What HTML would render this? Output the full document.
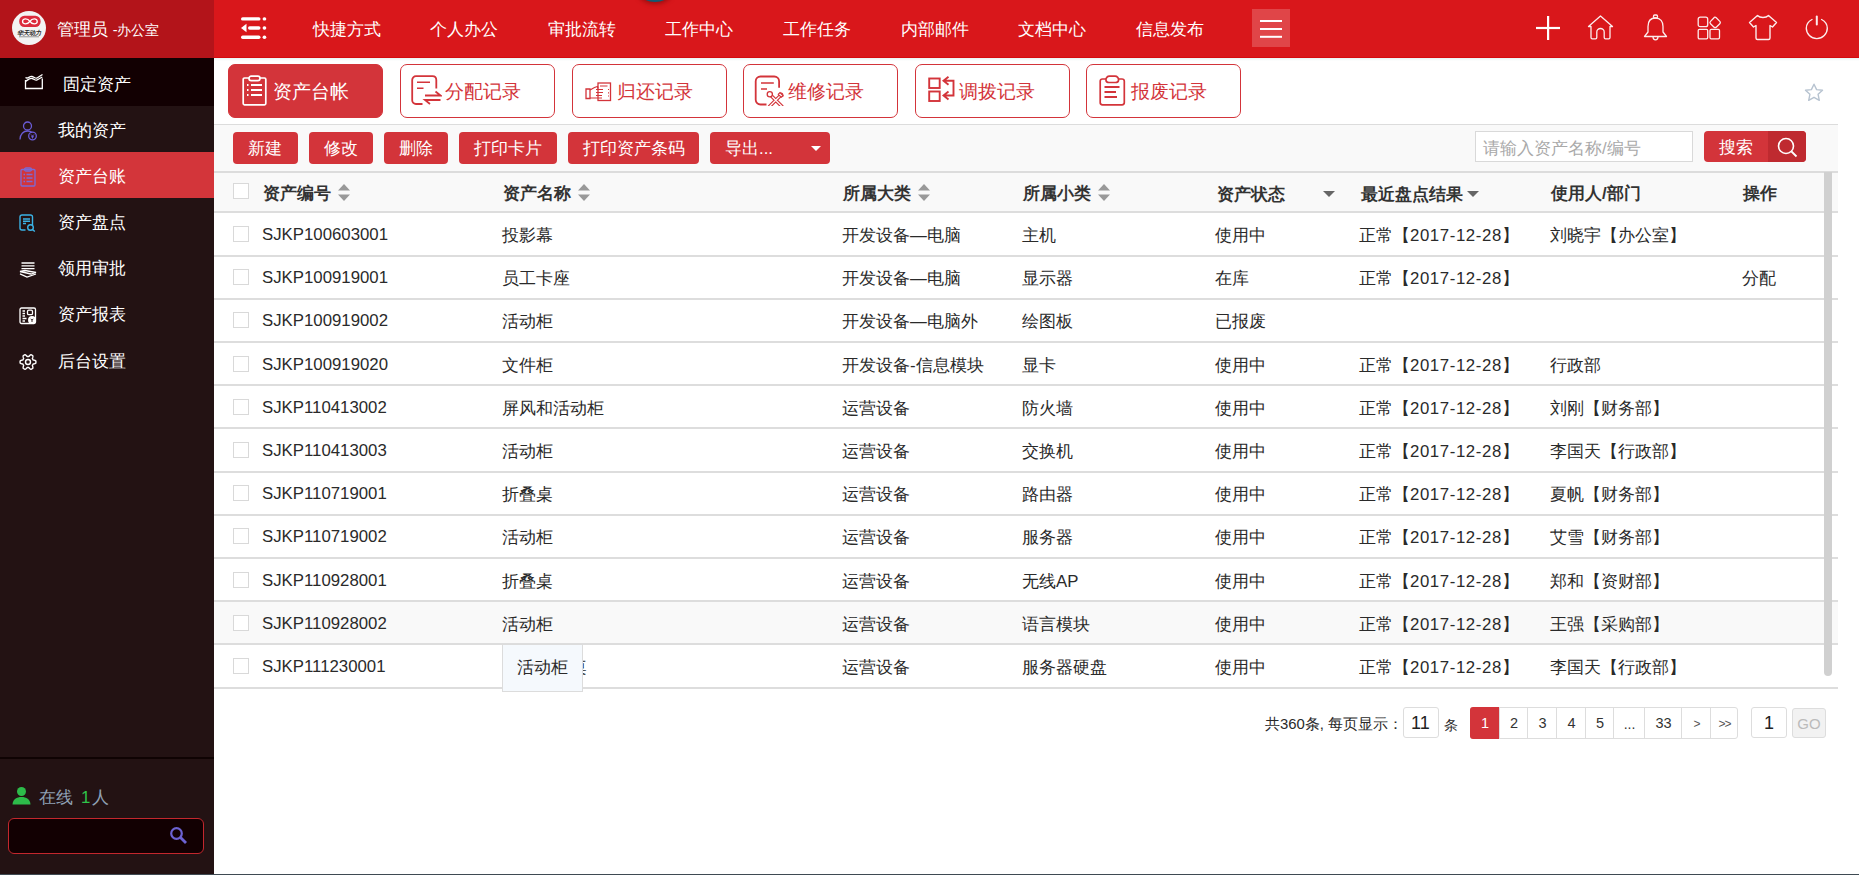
<!DOCTYPE html>
<html><head><meta charset="utf-8"><style>
*{margin:0;padding:0;box-sizing:border-box}
html,body{width:1859px;height:875px;overflow:hidden;background:#fff;font-family:"Liberation Sans",sans-serif;font-size:16.8px;color:#2a2a2a}
div,span,svg{position:absolute}
.t{white-space:nowrap;line-height:22px}
.w{color:#fff}
.mi{left:58px;color:#fff;white-space:nowrap;line-height:22px}
.nav{top:19px;color:#fff;white-space:nowrap;line-height:22px}
.tab{top:64px;width:155px;height:54px;border:1px solid #d3343a;border-radius:7px;background:#fff}
.tab.on{background:#d3343a}
.tabt{top:82px;color:#d3343a;font-size:19.2px;line-height:22px;white-space:nowrap}
.btn{top:132px;height:32px;background:#d3343a;border-radius:4px}
.btt{top:140px;color:#fff;white-space:nowrap;line-height:22px}
.cb{width:16px;height:16px;border:1px solid #d9d9d9;background:#fff}
.h{font-weight:bold;color:#333}
.ln{left:214px;width:1624px;height:2px;background:#ddd}
.sort{width:12px;height:17px}
.pg{top:707px;height:31px;border:1px solid #ddd;border-left:none;background:#fff;text-align:center;line-height:29px;font-size:15px;color:#333}
</style></head><body>
<div style="left:0;top:0;width:214px;height:875px;background:#231213"></div>
<div style="left:0;top:0;width:214px;height:58px;background:#b3141a"></div>
<svg style="left:12px;top:11px" width="34" height="34" viewBox="0 0 34 34">
<circle cx="17" cy="17" r="17" fill="#f3f3f3"/>
<rect x="7.2" y="4.8" width="21.4" height="11.2" rx="5.2" fill="#dc2a3c"/>
<path d="M17.9 10.4 C15.8 7.2 10.6 7.0 10.6 10.4 C10.6 13.8 15.8 13.6 17.9 10.4 C20.0 7.2 25.2 7.0 25.2 10.4 C25.2 13.8 20.0 13.6 17.9 10.4Z" fill="none" stroke="#fff" stroke-width="1.4"/>
<text x="17" y="23.6" text-anchor="middle" font-size="6.2" font-weight="bold" font-style="italic" fill="#2a2a2a" style="letter-spacing:-0.2px">华天动力</text>
<rect x="7" y="25" width="20" height="1.4" fill="#b0b0b0"/>
</svg>
<div class="t w" style="left:57px;top:19px">管理员 <span style="position:static;font-size:14.4px">-办公室</span></div>
<div style="left:0;top:58px;width:214px;height:48px;background:#120002"></div>
<div style="left:0;top:152px;width:214px;height:46px;background:#d3353a"></div>
<div class="mi" style="left:63px;top:74px">固定资产</div>
<div class="mi" style="left:58px;top:120px">我的资产</div>
<div class="mi" style="left:58px;top:166px">资产台账</div>
<div class="mi" style="left:58px;top:212px">资产盘点</div>
<div class="mi" style="left:58px;top:258px">领用审批</div>
<div class="mi" style="left:58px;top:304px">资产报表</div>
<div class="mi" style="left:58px;top:351px">后台设置</div>
<svg style="left:24px;top:73px" width="20" height="17" viewBox="0 0 20 17" fill="none" stroke="#fff" stroke-width="1.3">
<path d="M1.5 7 V15.5 H18.3 V5.5"/>
<path d="M1.5 4.5 C4 6.5 5 3 8 3.5 C10.5 4 11 6 13 5 L18.5 1.5"/>
<path d="M1.5 8.5 C4 7 5 5 8 5.5 C10.5 6 11 8 13 7 L18.3 4"/>
</svg>
<svg style="left:19px;top:121px" width="19" height="20" viewBox="0 0 19 20" fill="none" stroke="#6a5cd6" stroke-width="1.3">
<circle cx="8.5" cy="5" r="4"/>
<path d="M1 18.5 C1 13 4.5 10 8.5 10 C10.5 10 12 10.6 13.2 11.6"/>
<circle cx="13.5" cy="15" r="3.8"/>
<path d="M12 13.5 L13.5 15 L15 13.5 M13.5 15 V17.5 M12 15.8 H15" stroke-width="1"/>
</svg>
<svg style="left:20px;top:167px" width="16" height="20" viewBox="0 0 16 20" fill="none" stroke="#7b6bd6" stroke-width="1.3">
<rect x="1" y="2.5" width="14" height="16.5" rx="1"/>
<rect x="4.5" y="1" width="7" height="3" rx="1.5"/>
<path d="M3.5 7.5 H5 M6.5 7.5 H12.5 M3.5 11 H5 M6.5 11 H12.5 M3.5 14.5 H5 M6.5 14.5 H12.5" stroke-width="1.5"/>
</svg>
<svg style="left:19px;top:214px" width="18" height="18" viewBox="0 0 18 18" fill="none" stroke="#3bb3e6" stroke-width="1.4">
<path d="M13.5 11 V3 C13.5 1.8 12.7 1 11.5 1 H3 C1.8 1 1 1.8 1 3 V14 C1 15.2 1.8 16 3 16 H6.5"/>
<path d="M4 5 H11 M4 7.2 H11 M4 9.5 H7"/>
<circle cx="11.5" cy="13.5" r="2.8"/>
<path d="M13.5 15.5 L15.8 17.5"/>
</svg>
<svg style="left:19px;top:261px" width="18" height="17" viewBox="0 0 18 17" fill="none" stroke="#fff" stroke-width="1.3">
<path d="M2.5 2 H15.5 M2.5 4.8 H15.5 M2.5 7.6 H15.5"/>
<path d="M1 10.5 L6 9.5 L17 11.5 L12 13 Z"/>
<path d="M1 12.8 L8 16 L17 13"/>
</svg>
<svg style="left:19px;top:307px" width="18" height="18" viewBox="0 0 18 18" fill="none" stroke="#fff" stroke-width="1.3">
<rect x="1" y="1" width="15.5" height="15.5" rx="1.5"/>
<path d="M3.5 4 H6 M3.5 6.5 H6 M3.5 9 H6 M3.5 11.5 H7.5 M3.5 14 H6"/>
<rect x="8.5" y="3.2" width="5" height="4.5" rx="1.3"/>
<circle cx="13" cy="13" r="3.3" fill="#fff"/>
<path d="M11.8 11.8 L13 13.3 L14.2 11.8 M13 13.3 V15" stroke="#231213" stroke-width="0.9"/>
</svg>
<svg style="left:19px;top:353px" width="18" height="18" viewBox="0 0 18 18" fill="none" stroke="#fff" stroke-width="1.4">
<path d="M9.00 3.50 L9.14 3.50 L9.29 3.51 L9.43 3.52 L9.57 3.53 L9.72 3.55 L9.88 3.43 L10.07 3.22 L10.28 2.99 L10.50 2.76 L10.73 2.53 L10.98 2.31 L11.24 2.10 L11.51 1.91 L11.78 1.76 L12.02 1.70 L12.21 1.78 L12.40 1.87 L12.59 1.96 L12.77 2.06 L12.95 2.16 L13.13 2.26 L13.30 2.37 L13.47 2.49 L13.64 2.61 L13.81 2.73 L13.88 2.97 L13.88 3.28 L13.86 3.61 L13.81 3.94 L13.74 4.26 L13.66 4.58 L13.57 4.89 L13.47 5.18 L13.38 5.45 L13.36 5.65 L13.45 5.77 L13.53 5.88 L13.61 6.00 L13.69 6.13 L13.76 6.25 L13.83 6.38 L13.90 6.50 L13.96 6.63 L14.02 6.76 L14.08 6.90 L14.27 6.98 L14.55 7.04 L14.84 7.10 L15.15 7.18 L15.47 7.27 L15.79 7.37 L16.10 7.49 L16.39 7.63 L16.66 7.79 L16.83 7.97 L16.86 8.17 L16.88 8.38 L16.89 8.59 L16.90 8.79 L16.90 9.00 L16.90 9.21 L16.89 9.41 L16.88 9.62 L16.86 9.83 L16.83 10.03 L16.66 10.21 L16.39 10.37 L16.10 10.51 L15.79 10.63 L15.47 10.73 L15.15 10.82 L14.84 10.90 L14.55 10.96 L14.27 11.02 L14.08 11.10 L14.02 11.24 L13.96 11.37 L13.90 11.50 L13.83 11.62 L13.76 11.75 L13.69 11.87 L13.61 12.00 L13.53 12.12 L13.45 12.23 L13.36 12.35 L13.38 12.55 L13.47 12.82 L13.57 13.11 L13.66 13.42 L13.74 13.74 L13.81 14.06 L13.86 14.39 L13.88 14.72 L13.88 15.03 L13.81 15.27 L13.64 15.39 L13.47 15.51 L13.30 15.63 L13.13 15.74 L12.95 15.84 L12.77 15.94 L12.59 16.04 L12.40 16.13 L12.21 16.22 L12.02 16.30 L11.78 16.24 L11.51 16.09 L11.24 15.90 L10.98 15.69 L10.73 15.47 L10.50 15.24 L10.28 15.01 L10.07 14.78 L9.88 14.57 L9.72 14.45 L9.57 14.47 L9.43 14.48 L9.29 14.49 L9.14 14.50 L9.00 14.50 L8.86 14.50 L8.71 14.49 L8.57 14.48 L8.43 14.47 L8.28 14.45 L8.12 14.57 L7.93 14.78 L7.72 15.01 L7.50 15.24 L7.27 15.47 L7.02 15.69 L6.76 15.90 L6.49 16.09 L6.22 16.24 L5.98 16.30 L5.79 16.22 L5.60 16.13 L5.41 16.04 L5.23 15.94 L5.05 15.84 L4.87 15.74 L4.70 15.63 L4.53 15.51 L4.36 15.39 L4.19 15.27 L4.12 15.03 L4.12 14.72 L4.14 14.39 L4.19 14.06 L4.26 13.74 L4.34 13.42 L4.43 13.11 L4.53 12.82 L4.62 12.55 L4.64 12.35 L4.55 12.23 L4.47 12.12 L4.39 12.00 L4.31 11.87 L4.24 11.75 L4.17 11.62 L4.10 11.50 L4.04 11.37 L3.98 11.24 L3.92 11.10 L3.73 11.02 L3.45 10.96 L3.16 10.90 L2.85 10.82 L2.53 10.73 L2.21 10.63 L1.90 10.51 L1.61 10.37 L1.34 10.21 L1.17 10.03 L1.14 9.83 L1.12 9.62 L1.11 9.41 L1.10 9.21 L1.10 9.00 L1.10 8.79 L1.11 8.59 L1.12 8.38 L1.14 8.17 L1.17 7.97 L1.34 7.79 L1.61 7.63 L1.90 7.49 L2.21 7.37 L2.53 7.27 L2.85 7.18 L3.16 7.10 L3.45 7.04 L3.73 6.98 L3.92 6.90 L3.98 6.76 L4.04 6.63 L4.10 6.50 L4.17 6.38 L4.24 6.25 L4.31 6.13 L4.39 6.00 L4.47 5.88 L4.55 5.77 L4.64 5.65 L4.62 5.45 L4.53 5.18 L4.43 4.89 L4.34 4.58 L4.26 4.26 L4.19 3.94 L4.14 3.61 L4.12 3.28 L4.12 2.97 L4.19 2.73 L4.36 2.61 L4.53 2.49 L4.70 2.37 L4.87 2.26 L5.05 2.16 L5.23 2.06 L5.41 1.96 L5.60 1.87 L5.79 1.78 L5.98 1.70 L6.22 1.76 L6.49 1.91 L6.76 2.10 L7.02 2.31 L7.27 2.53 L7.50 2.76 L7.72 2.99 L7.93 3.22 L8.12 3.43 L8.28 3.55 L8.43 3.53 L8.57 3.52 L8.71 3.51 L8.86 3.50Z" stroke-linejoin="round"/>
<circle cx="9" cy="9" r="2.5"/>
</svg>
<div style="left:0;top:757px;width:214px;height:2px;background:#0f0303"></div>
<svg style="left:12px;top:786px" width="19" height="19" viewBox="0 0 19 19"><circle cx="9.5" cy="5.5" r="4.5" fill="#2dbb4a"/><path d="M0.5 18.5 C1 13 4.5 11 9.5 11 C14.5 11 18 13 18.5 18.5 Z" fill="#2dbb4a"/></svg>
<div class="t" style="left:39px;top:787px;color:#8fa0b4">在线<span style="position:static;color:#2fc34a;padding:0 2px 0 8px">1</span>人</div>
<div style="left:8px;top:818px;width:196px;height:36px;border:1px solid #c3272d;border-radius:6px;background:#120002"></div>
<svg style="left:169px;top:826px" width="19" height="19" viewBox="0 0 19 19" fill="none" stroke="#6c62d2" stroke-width="2.2"><circle cx="7.5" cy="7.5" r="5.3"/><path d="M11.5 11.5 L17 17" stroke-width="2.8"/></svg>
<div style="left:214px;top:0;width:1645px;height:58px;background:#d9171b"></div>
<div style="left:214px;top:57px;width:1645px;height:1px;background:#d50a0e"></div>
<div style="left:214px;top:58px;width:1645px;height:3px;background:linear-gradient(#e9f3f3,#fff)"></div>
<div style="left:640px;top:-16px;width:30px;height:18px;border-radius:50%;background:#125a73;box-shadow:0 0 4px 2px rgba(120,10,10,.6)"></div>
<svg style="left:240px;top:16px" width="28" height="24" viewBox="0 0 28 24" fill="#fff">
<rect x="1" y="1.2" width="19.5" height="3.4" rx="1.7"/><rect x="22.6" y="1.2" width="3.7" height="3.4" rx="1.7"/>
<rect x="8" y="10.3" width="12.5" height="3.4" rx="1.7"/><rect x="22.6" y="10.3" width="3.7" height="3.4" rx="1.7"/>
<path d="M1 12 L6.5 7.8 V16.2 Z"/>
<rect x="1" y="19.5" width="19.5" height="3.4" rx="1.7"/><rect x="22.6" y="19.5" width="3.7" height="3.4" rx="1.7"/>
</svg>
<div class="nav" style="left:313px">快捷方式</div>
<div class="nav" style="left:430px">个人办公</div>
<div class="nav" style="left:548px">审批流转</div>
<div class="nav" style="left:665px">工作中心</div>
<div class="nav" style="left:783px">工作任务</div>
<div class="nav" style="left:901px">内部邮件</div>
<div class="nav" style="left:1018px">文档中心</div>
<div class="nav" style="left:1136px">信息发布</div>
<div style="left:1252px;top:9px;width:38px;height:38px;background:rgba(255,255,255,.2)"></div>
<svg style="left:1259px;top:19px" width="24" height="19" viewBox="0 0 24 19" fill="#fff"><rect x="1" y="1" width="22" height="2"/><rect x="1" y="9" width="22" height="2"/><rect x="1" y="16.8" width="22" height="2"/></svg>
<svg style="left:1535px;top:15px" width="26" height="26" viewBox="0 0 26 26" fill="#fff"><rect x="12" y="1" width="2.2" height="24"/><rect x="1" y="11.9" width="24" height="2.2"/></svg>
<svg style="left:1587px;top:15px" width="27" height="25" viewBox="0 0 27 25" fill="none" stroke="#fff" stroke-width="1.3" opacity=".92" stroke-linejoin="round">
<path d="M1.5 11.5 L13.5 1 L25.5 11.5 L23 11.5 V22.5 C23 23.3 22.5 23.8 21.7 23.8 H18.5 C17.7 23.8 17.2 23.3 17.2 22.5 V17 C17.2 15 15.5 13.5 13.5 13.5 C11.5 13.5 9.8 15 9.8 17 V22.5 C9.8 23.3 9.3 23.8 8.5 23.8 H5.3 C4.5 23.8 4 23.3 4 22.5 V11.5 Z"/>
</svg>
<svg style="left:1643px;top:14px" width="25" height="27" viewBox="0 0 25 27" fill="none" stroke="#fff" stroke-width="1.3" opacity=".92" stroke-linejoin="round">
<rect x="10.5" y="1" width="4" height="3" rx="1.2"/>
<path d="M12.5 4 C7.5 4 5 7.5 5 12.5 V18 L1.5 22.5 H23.5 L20 18 V12.5 C20 7.5 17.5 4 12.5 4 Z"/>
<path d="M10 22.8 C10 24.8 11 25.8 12.5 25.8 C14 25.8 15 24.8 15 22.8"/>
</svg>
<svg style="left:1697px;top:16px" width="25" height="24" viewBox="0 0 25 24" fill="none" stroke="#fff" stroke-width="1.3" opacity=".92">
<rect x="1.2" y="1.2" width="9.5" height="9.5" rx="2"/>
<path d="M17.9 1.2 C18.5 1.2 19 1.5 19.5 2 L22.8 5.4 C23.5 6.1 23.5 7 22.8 7.7 L19.5 11 C18.8 11.7 17.5 11.7 16.8 11 L13.5 7.7 C12.8 7 12.8 6.1 13.5 5.4 L16.8 2 C17.1 1.5 17.5 1.2 17.9 1.2Z"/>
<rect x="1.2" y="13.3" width="9.5" height="9.5" rx="1.2"/>
<rect x="13" y="13.3" width="9.5" height="9.5" rx="1.2"/>
</svg>
<svg style="left:1748px;top:14px" width="30" height="27" viewBox="0 0 30 27" fill="none" stroke="#fff" stroke-width="1.4" opacity=".92" stroke-linejoin="round">
<path d="M9.5 1.5 C11 3 12.5 3.5 15 3.5 C17.5 3.5 19 3 20.5 1.5 L28.5 8.5 L24.5 13 L22 11.5 V24 C22 25 21.5 25.5 20.5 25.5 H9.5 C8.5 25.5 8 25 8 24 V11.5 L5.5 13 L1.5 8.5 Z"/>
</svg>
<svg style="left:1805px;top:15px" width="24" height="25" viewBox="0 0 24 25" fill="none" stroke="#fff" stroke-width="1.4" opacity=".92" stroke-linecap="round">
<path d="M7 4.5 C3.5 6.3 1.3 9.5 1.3 13.3 C1.3 19 6 23.6 11.8 23.6 C17.6 23.6 22.3 19 22.3 13.3 C22.3 9.5 20.1 6.3 16.6 4.5"/>
<path d="M11.8 1.5 V9.5" stroke-width="2"/>
</svg>
<div class="tab on" style="left:228px"></div>
<div class="tabt" style="left:273px;top:81px;color:#fff">资产台帐</div>
<div class="tab" style="left:400px"></div>
<div class="tabt" style="left:445px;top:81px">分配记录</div>
<div class="tab" style="left:572px"></div>
<div class="tabt" style="left:617px;top:81px">归还记录</div>
<div class="tab" style="left:743px"></div>
<div class="tabt" style="left:788px;top:81px">维修记录</div>
<div class="tab" style="left:915px"></div>
<div class="tabt" style="left:959px;top:81px">调拨记录</div>
<div class="tab" style="left:1086px"></div>
<div class="tabt" style="left:1131px;top:81px">报废记录</div>
<svg style="left:242px;top:75px" width="25" height="31" viewBox="0 0 25 31" fill="none" stroke="#fff" stroke-width="1.7">
<path d="M7 3 H2.5 C1.7 3 1.2 3.5 1.2 4.3 V28.5 C1.2 29.3 1.7 29.8 2.5 29.8 H22.5 C23.3 29.8 23.8 29.3 23.8 28.5 V4.3 C23.8 3.5 23.3 3 22.5 3 H18"/>
<rect x="7" y="1.2" width="11" height="4.5" rx="2.2"/>
<path d="M5 10 H6.5 M9 10 H20 M5 15 H6.5 M9 15 H20 M5 20 H6.5 M9 20 H20" stroke-width="2"/>
</svg>
<svg style="left:411px;top:75px" width="31" height="31" viewBox="0 0 31 31" fill="none" stroke="#d3343a" stroke-width="1.8">
<path d="M11.5 29 H5 C2.8 29 1.2 27.4 1.2 25.2 V5 C1.2 2.8 2.8 1.2 5 1.2 H21.5 C23.7 1.2 25.3 2.8 25.3 5 V13.5"/>
<path d="M6 7.2 H19 M6 13.3 H12.5" stroke-width="1.6"/>
<path d="M14 20.5 H29.5 L24.5 16.5" stroke-width="1.8"/>
<path d="M29.5 25 H14 L19 29" stroke-width="1.8"/>
</svg>
<svg style="left:585px;top:82px" width="27" height="20" viewBox="0 0 27 20" fill="none" stroke="#d3343a" stroke-width="1.3">
<rect x="13" y="1" width="12.5" height="17.5"/>
<path d="M15 4 H22.5 M23 7.5 H24 M23 10.8 H24 M23 14 H24" stroke-width="1.2"/>
<path d="M1 7 H5 V16.5 H1 Z"/>
<path d="M5 8 L9.5 5.5 L12.5 4.5 L13 6.5 M5 16 H11 M11 7.5 H18 M11 10.5 H18 M11 13.5 H17 M11 16 H17" stroke-width="1.2"/>
</svg>
<svg style="left:754px;top:75px" width="30" height="31" viewBox="0 0 30 31" fill="none" stroke="#d3343a" stroke-width="1.8">
<path d="M12.5 29.5 H6.5 C3.8 29.5 1.7 27.4 1.7 24.7 V6.3 C1.7 3.6 3.8 1.5 6.5 1.5 H20.3 C23 1.5 25.1 3.6 25.1 6.3 V12.8"/>
<path d="M7 8 H19.8 M7 14 H13" stroke-width="1.7"/>
<path d="M15.5 19 L28 31.5 M27.5 19.5 L15.5 31.5" stroke-width="3.6" stroke-linecap="round"/>
<path d="M15.5 19 L28 31.5 M27.5 19.5 L15.5 31.5" stroke="#fff" stroke-width="1.3" stroke-linecap="round"/>
<circle cx="15.8" cy="19.3" r="2.6" fill="#fff" stroke-width="1.3"/>
<path d="M26 17.5 L29.2 20.8 L27.2 22.2 L24.3 19.3 Z" fill="#fff" stroke-width="1.2"/>
</svg>
<svg style="left:928px;top:76px" width="28" height="27" viewBox="0 0 28 27" fill="none" stroke="#d3343a" stroke-width="1.9">
<rect x="1.2" y="2.5" width="10.5" height="9.5"/>
<rect x="1.2" y="15.5" width="10.5" height="9.5"/>
<path d="M20.5 0.8 L15.5 4.8 L20.5 8.8 M15.5 4.8 H25.5 V19.5 H15.5 M20.5 15.5 L15.5 19.5 L20.5 23.5"/>
</svg>
<svg style="left:1099px;top:75px" width="27" height="31" viewBox="0 0 27 31" fill="none" stroke="#d3343a" stroke-width="1.7">
<path d="M7 4 H3.5 C2 4 1.2 4.8 1.2 6.3 V27.5 C1.2 29 2 29.8 3.5 29.8 H23 C24.5 29.8 25.3 29 25.3 27.5 V6.3 C25.3 4.8 24.5 4 23 4 H19.5"/>
<path d="M7 5.5 C6.5 3 8.5 1.2 10.5 1.2 H16 C18 1.2 20 3 19.5 5.5 C19.2 7 18 7.5 16.5 7.5 H10 C8.5 7.5 7.3 7 7 5.5Z"/>
<path d="M5.5 12 H20.5 M5.5 17 H17 M5.5 22 H18" stroke-width="1.9"/>
</svg>
<svg style="left:1804px;top:83px" width="20" height="19" viewBox="0 0 20 19" fill="none" stroke="#b7c3d0" stroke-width="1.4" stroke-linejoin="round">
<path d="M10 1.2 L12.6 6.6 L18.5 7.3 L14.1 11.3 L15.3 17.3 L10 14.3 L4.7 17.3 L5.9 11.3 L1.5 7.3 L7.4 6.6 Z"/>
</svg>
<div style="left:214px;top:124px;width:1624px;height:1px;background:#dcdcdc"></div>
<div style="left:214px;top:125px;width:1624px;height:46px;background:#f9f9f9"></div>
<div style="left:214px;top:171px;width:1624px;height:2px;background:#dcdcdc"></div>
<div class="btn" style="left:233px;width:65px"></div>
<div class="btt" style="left:248px;top:138px">新建</div>
<div class="btn" style="left:309px;width:64px"></div>
<div class="btt" style="left:324px;top:138px">修改</div>
<div class="btn" style="left:384px;width:64px"></div>
<div class="btt" style="left:399px;top:138px">删除</div>
<div class="btn" style="left:459px;width:98px"></div>
<div class="btt" style="left:474px;top:138px">打印卡片</div>
<div class="btn" style="left:568px;width:131px"></div>
<div class="btt" style="left:583px;top:138px">打印资产条码</div>
<div class="btn" style="left:710px;width:120px"></div>
<div class="btt" style="left:725px;top:138px">导出...</div>
<svg style="left:810px;top:145px" width="12" height="7" viewBox="0 0 12 7"><path d="M1 1 H11 L6 6 Z" fill="#fff"/></svg>
<div style="left:1475px;top:131px;width:218px;height:31px;border:1px solid #d9d9d9;background:#fff"></div>
<div class="t" style="left:1483px;top:138px;color:#a9a9a9">请输入资产名称/编号</div>
<div style="left:1704px;top:131px;width:102px;height:31px;background:#d3343a;border-radius:4px"></div>
<div style="left:1768px;top:131px;width:38px;height:31px;background:#bf2a30;border-radius:0 4px 4px 0"></div>
<div class="btt" style="left:1719px;top:137px">搜索</div>
<svg style="left:1776px;top:136px" width="24" height="24" viewBox="0 0 24 24" fill="none" stroke="#fff" stroke-width="1.6"><circle cx="10" cy="10" r="7.5"/><path d="M15.5 15.5 L20.5 20.5" stroke-width="1.8"/></svg>
<div style="left:214px;top:173px;width:1624px;height:38px;background:#f9f9f9"></div>
<div class="ln" style="top:211px"></div>
<div style="left:214px;top:602px;width:1624px;height:41px;background:#f9f9f9"></div>
<div class="ln" style="top:255px"></div>
<div class="ln" style="top:298px"></div>
<div class="ln" style="top:341px"></div>
<div class="ln" style="top:384px"></div>
<div class="ln" style="top:427px"></div>
<div class="ln" style="top:471px"></div>
<div class="ln" style="top:514px"></div>
<div class="ln" style="top:557px"></div>
<div class="ln" style="top:600px"></div>
<div class="ln" style="top:643px"></div>
<div class="ln" style="top:687px"></div>
<div class="cb" style="left:233px;top:183px"></div>
<div class="t h" style="left:263px;top:183px">资产编号</div>
<div class="t h" style="left:503px;top:183px">资产名称</div>
<div class="t h" style="left:843px;top:183px">所属大类</div>
<div class="t h" style="left:1023px;top:183px">所属小类</div>
<div class="t h" style="left:1217px;top:184px">资产状态</div>
<div class="t h" style="left:1361px;top:184px">最近盘点结果</div>
<div class="t h" style="left:1551px;top:183px">使用人/部门</div>
<div class="t h" style="left:1743px;top:183px">操作</div>
<svg class="sort" style="left:338px;top:184px" width="12" height="17" viewBox="0 0 12 17" fill="#999"><path d="M6 0 L12 6.5 H0 Z M0 10.5 H12 L6 17 Z"/></svg>
<svg class="sort" style="left:578px;top:184px" width="12" height="17" viewBox="0 0 12 17" fill="#999"><path d="M6 0 L12 6.5 H0 Z M0 10.5 H12 L6 17 Z"/></svg>
<svg class="sort" style="left:918px;top:184px" width="12" height="17" viewBox="0 0 12 17" fill="#999"><path d="M6 0 L12 6.5 H0 Z M0 10.5 H12 L6 17 Z"/></svg>
<svg class="sort" style="left:1098px;top:184px" width="12" height="17" viewBox="0 0 12 17" fill="#999"><path d="M6 0 L12 6.5 H0 Z M0 10.5 H12 L6 17 Z"/></svg>
<svg style="left:1323px;top:191px" width="12" height="6" viewBox="0 0 12 6"><path d="M0 0 H12 L6 6 Z" fill="#666"/></svg>
<svg style="left:1467px;top:191px" width="12" height="6" viewBox="0 0 12 6"><path d="M0 0 H12 L6 6 Z" fill="#666"/></svg>
<div class="cb" style="left:233px;top:226px"></div>
<div class="t" style="left:262px;top:224px">SJKP100603001</div>
<div class="t" style="left:502px;top:225px">投影幕</div>
<div class="t" style="left:842px;top:225px">开发设备—电脑</div>
<div class="t" style="left:1022px;top:225px">主机</div>
<div class="t" style="left:1215px;top:225px">使用中</div>
<div class="t" style="left:1359px;top:225px">正常【<span style="position:static;letter-spacing:0.6px">2017-12-28</span>】</div>
<div class="t" style="left:1550px;top:225px">刘晓宇【办公室】</div>
<div class="cb" style="left:233px;top:269px"></div>
<div class="t" style="left:262px;top:267px">SJKP100919001</div>
<div class="t" style="left:502px;top:268px">员工卡座</div>
<div class="t" style="left:842px;top:268px">开发设备—电脑</div>
<div class="t" style="left:1022px;top:268px">显示器</div>
<div class="t" style="left:1215px;top:268px">在库</div>
<div class="t" style="left:1359px;top:268px">正常【<span style="position:static;letter-spacing:0.6px">2017-12-28</span>】</div>
<div class="t" style="left:1742px;top:268px">分配</div>
<div class="cb" style="left:233px;top:312px"></div>
<div class="t" style="left:262px;top:310px">SJKP100919002</div>
<div class="t" style="left:502px;top:311px">活动柜</div>
<div class="t" style="left:842px;top:311px">开发设备—电脑外</div>
<div class="t" style="left:1022px;top:311px">绘图板</div>
<div class="t" style="left:1215px;top:311px">已报废</div>
<div class="cb" style="left:233px;top:356px"></div>
<div class="t" style="left:262px;top:354px">SJKP100919020</div>
<div class="t" style="left:502px;top:355px">文件柜</div>
<div class="t" style="left:842px;top:355px">开发设备-信息模块</div>
<div class="t" style="left:1022px;top:355px">显卡</div>
<div class="t" style="left:1215px;top:355px">使用中</div>
<div class="t" style="left:1359px;top:355px">正常【<span style="position:static;letter-spacing:0.6px">2017-12-28</span>】</div>
<div class="t" style="left:1550px;top:355px">行政部</div>
<div class="cb" style="left:233px;top:399px"></div>
<div class="t" style="left:262px;top:397px">SJKP110413002</div>
<div class="t" style="left:502px;top:398px">屏风和活动柜</div>
<div class="t" style="left:842px;top:398px">运营设备</div>
<div class="t" style="left:1022px;top:398px">防火墙</div>
<div class="t" style="left:1215px;top:398px">使用中</div>
<div class="t" style="left:1359px;top:398px">正常【<span style="position:static;letter-spacing:0.6px">2017-12-28</span>】</div>
<div class="t" style="left:1550px;top:398px">刘刚【财务部】</div>
<div class="cb" style="left:233px;top:442px"></div>
<div class="t" style="left:262px;top:440px">SJKP110413003</div>
<div class="t" style="left:502px;top:441px">活动柜</div>
<div class="t" style="left:842px;top:441px">运营设备</div>
<div class="t" style="left:1022px;top:441px">交换机</div>
<div class="t" style="left:1215px;top:441px">使用中</div>
<div class="t" style="left:1359px;top:441px">正常【<span style="position:static;letter-spacing:0.6px">2017-12-28</span>】</div>
<div class="t" style="left:1550px;top:441px">李国天【行政部】</div>
<div class="cb" style="left:233px;top:485px"></div>
<div class="t" style="left:262px;top:483px">SJKP110719001</div>
<div class="t" style="left:502px;top:484px">折叠桌</div>
<div class="t" style="left:842px;top:484px">运营设备</div>
<div class="t" style="left:1022px;top:484px">路由器</div>
<div class="t" style="left:1215px;top:484px">使用中</div>
<div class="t" style="left:1359px;top:484px">正常【<span style="position:static;letter-spacing:0.6px">2017-12-28</span>】</div>
<div class="t" style="left:1550px;top:484px">夏帆【财务部】</div>
<div class="cb" style="left:233px;top:528px"></div>
<div class="t" style="left:262px;top:526px">SJKP110719002</div>
<div class="t" style="left:502px;top:527px">活动柜</div>
<div class="t" style="left:842px;top:527px">运营设备</div>
<div class="t" style="left:1022px;top:527px">服务器</div>
<div class="t" style="left:1215px;top:527px">使用中</div>
<div class="t" style="left:1359px;top:527px">正常【<span style="position:static;letter-spacing:0.6px">2017-12-28</span>】</div>
<div class="t" style="left:1550px;top:527px">艾雪【财务部】</div>
<div class="cb" style="left:233px;top:572px"></div>
<div class="t" style="left:262px;top:570px">SJKP110928001</div>
<div class="t" style="left:502px;top:571px">折叠桌</div>
<div class="t" style="left:842px;top:571px">运营设备</div>
<div class="t" style="left:1022px;top:571px">无线AP</div>
<div class="t" style="left:1215px;top:571px">使用中</div>
<div class="t" style="left:1359px;top:571px">正常【<span style="position:static;letter-spacing:0.6px">2017-12-28</span>】</div>
<div class="t" style="left:1550px;top:571px">郑和【资财部】</div>
<div class="cb" style="left:233px;top:615px"></div>
<div class="t" style="left:262px;top:613px">SJKP110928002</div>
<div class="t" style="left:502px;top:614px">活动柜</div>
<div class="t" style="left:842px;top:614px">运营设备</div>
<div class="t" style="left:1022px;top:614px">语言模块</div>
<div class="t" style="left:1215px;top:614px">使用中</div>
<div class="t" style="left:1359px;top:614px">正常【<span style="position:static;letter-spacing:0.6px">2017-12-28</span>】</div>
<div class="t" style="left:1550px;top:614px">王强【采购部】</div>
<div class="cb" style="left:233px;top:658px"></div>
<div class="t" style="left:262px;top:656px">SJKP111230001</div>
<div class="t" style="left:502px;top:657px">活动柜和桌</div>
<div class="t" style="left:842px;top:657px">运营设备</div>
<div class="t" style="left:1022px;top:657px">服务器硬盘</div>
<div class="t" style="left:1215px;top:657px">使用中</div>
<div class="t" style="left:1359px;top:657px">正常【<span style="position:static;letter-spacing:0.6px">2017-12-28</span>】</div>
<div class="t" style="left:1550px;top:657px">李国天【行政部】</div>
<div style="left:1824px;top:172px;width:8px;height:504px;background:#d0d0d0;border-radius:0 0 4px 4px"></div>
<div style="left:502px;top:644px;width:81px;height:48px;border:1px solid #dcdcdc;background:#f5f9fd"></div>
<div class="t" style="left:517px;top:657px">活动柜</div>
<div class="t" style="left:1265px;top:713px;font-size:14.9px">共360条, 每页显示：</div>
<div style="left:1403px;top:707px;width:36px;height:31px;border:1px solid #ddd;border-radius:3px;background:#fff"></div>
<div class="t" style="left:1411px;top:712px;font-size:18px;color:#222">11</div>
<div class="t" style="left:1444px;top:714px;font-size:14.4px">条</div>
<div style="left:1470px;top:707px;width:268px;height:32px;border:1px solid #ddd;border-radius:3px;background:#fff"></div>
<div style="left:1470px;top:707px;width:30px;height:32px;background:#d3343a;border-radius:3px 0 0 3px"></div>
<div class="t" style="left:1470px;top:712px;width:30px;text-align:center;color:#fff;font-size:14.5px">1</div>
<div style="left:1499px;top:707px;width:1px;height:32px;background:#ddd"></div>
<div class="t" style="left:1500px;top:712px;width:28px;text-align:center;color:#333;font-size:14.5px">2</div>
<div style="left:1527px;top:707px;width:1px;height:32px;background:#ddd"></div>
<div class="t" style="left:1528px;top:712px;width:29px;text-align:center;color:#333;font-size:14.5px">3</div>
<div style="left:1556px;top:707px;width:1px;height:32px;background:#ddd"></div>
<div class="t" style="left:1557px;top:712px;width:29px;text-align:center;color:#333;font-size:14.5px">4</div>
<div style="left:1585px;top:707px;width:1px;height:32px;background:#ddd"></div>
<div class="t" style="left:1586px;top:712px;width:28px;text-align:center;color:#333;font-size:14.5px">5</div>
<div style="left:1613px;top:707px;width:1px;height:32px;background:#ddd"></div>
<div class="t" style="left:1614px;top:713px;width:31px;text-align:center;color:#333;font-size:14px">...</div>
<div style="left:1644px;top:707px;width:1px;height:32px;background:#ddd"></div>
<div class="t" style="left:1645px;top:712px;width:37px;text-align:center;color:#333;font-size:14.5px">33</div>
<div style="left:1681px;top:707px;width:1px;height:32px;background:#ddd"></div>
<div class="t" style="left:1682px;top:713px;width:29px;text-align:center;color:#555;font-size:12px;letter-spacing:-1px">&gt;</div>
<div style="left:1710px;top:707px;width:1px;height:32px;background:#ddd"></div>
<div class="t" style="left:1711px;top:713px;width:27px;text-align:center;color:#555;font-size:12px;letter-spacing:-1px">&gt;&gt;</div>
<div style="left:1751px;top:707px;width:36px;height:31px;border:1px solid #ddd;border-radius:3px;background:#fff"></div>
<div class="t" style="left:1751px;top:712px;width:36px;text-align:center;font-size:18px;color:#222">1</div>
<div style="left:1792px;top:708px;width:34px;height:30px;border:1px solid #ddd;border-radius:3px;background:#f2f2f2"></div>
<div class="t" style="left:1792px;top:713px;width:34px;text-align:center;font-size:15px;color:#bbb">GO</div>
<div style="left:0;top:874px;width:1859px;height:1px;background:#3f4a52"></div>
</body></html>
